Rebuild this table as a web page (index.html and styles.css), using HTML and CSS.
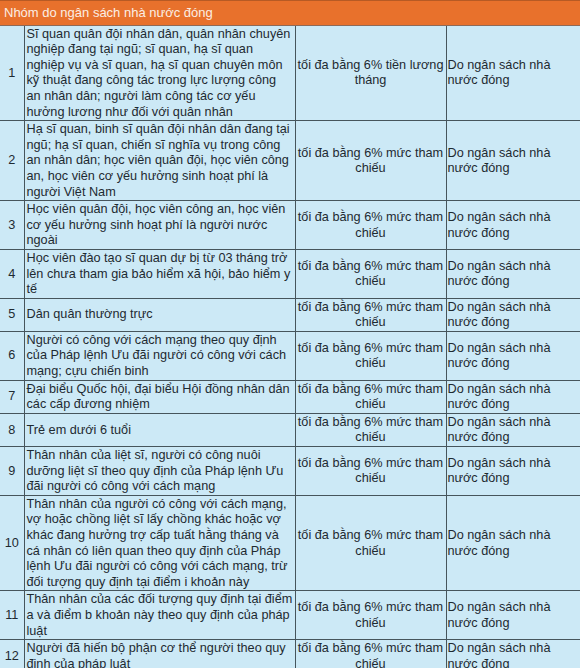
FILE: index.html
```html
<!DOCTYPE html>
<html lang="vi">
<head>
<meta charset="utf-8">
<title>Nhóm do ngân sách nhà nước đóng</title>
<link rel="stylesheet" href="styles.css">
</head>
<body>
<table class="grid">
  <colgroup>
    <col class="c-no">
    <col class="c-subject">
    <col class="c-rate">
    <col class="c-payer">
  </colgroup>
  <tbody>
    <tr class="group-row">
      <td colspan="4" class="group">Nhóm do ngân sách nhà nước đóng</td>
    </tr>
    <tr>
      <td class="no">1</td>
      <td class="subject">Sĩ quan quân đội nhân dân, quân nhân chuyên nghiệp đang tại ngũ; sĩ quan, hạ sĩ quan nghiệp vụ và sĩ quan, hạ sĩ quan chuyên môn kỹ thuật đang công tác trong lực lượng công an nhân dân; người làm công tác cơ yếu hưởng lương như đối với quân nhân</td>
      <td class="rate">tối đa bằng 6% tiền lương tháng</td>
      <td class="payer">Do ngân sách nhà nước đóng</td>
    </tr>
    <tr>
      <td class="no">2</td>
      <td class="subject">Hạ sĩ quan, binh sĩ quân đội nhân dân đang tại ngũ; hạ sĩ quan, chiến sĩ nghĩa vụ trong công an nhân dân; học viên quân đội, học viên công an, học viên cơ yếu hưởng sinh hoạt phí là người Việt Nam</td>
      <td class="rate">tối đa bằng 6% mức tham chiếu</td>
      <td class="payer">Do ngân sách nhà nước đóng</td>
    </tr>
    <tr>
      <td class="no">3</td>
      <td class="subject">Học viên quân đội, học viên công an, học viên cơ yếu hưởng sinh hoạt phí là người nước ngoài</td>
      <td class="rate">tối đa bằng 6% mức tham chiếu</td>
      <td class="payer">Do ngân sách nhà nước đóng</td>
    </tr>
    <tr>
      <td class="no">4</td>
      <td class="subject">Học viên đào tạo sĩ quan dự bị từ 03 tháng trở lên chưa tham gia bảo hiểm xã hội, bảo hiểm y tế</td>
      <td class="rate">tối đa bằng 6% mức tham chiếu</td>
      <td class="payer">Do ngân sách nhà nước đóng</td>
    </tr>
    <tr>
      <td class="no">5</td>
      <td class="subject">Dân quân thường trực</td>
      <td class="rate">tối đa bằng 6% mức tham chiếu</td>
      <td class="payer">Do ngân sách nhà nước đóng</td>
    </tr>
    <tr>
      <td class="no">6</td>
      <td class="subject">Người có công với cách mạng theo quy định của Pháp lệnh Ưu đãi người có công với cách mạng; cựu chiến binh</td>
      <td class="rate">tối đa bằng 6% mức tham chiếu</td>
      <td class="payer">Do ngân sách nhà nước đóng</td>
    </tr>
    <tr>
      <td class="no">7</td>
      <td class="subject">Đại biểu Quốc hội, đại biểu Hội đồng nhân dân các cấp đương nhiệm</td>
      <td class="rate">tối đa bằng 6% mức tham chiếu</td>
      <td class="payer">Do ngân sách nhà nước đóng</td>
    </tr>
    <tr>
      <td class="no">8</td>
      <td class="subject">Trẻ em dưới 6 tuổi</td>
      <td class="rate">tối đa bằng 6% mức tham chiếu</td>
      <td class="payer">Do ngân sách nhà nước đóng</td>
    </tr>
    <tr>
      <td class="no">9</td>
      <td class="subject">Thân nhân của liệt sĩ, người có công nuôi dưỡng liệt sĩ theo quy định của Pháp lệnh Ưu đãi người có công với cách mạng</td>
      <td class="rate">tối đa bằng 6% mức tham chiếu</td>
      <td class="payer">Do ngân sách nhà nước đóng</td>
    </tr>
    <tr>
      <td class="no">10</td>
      <td class="subject">Thân nhân của người có công với cách mạng, vợ hoặc chồng liệt sĩ lấy chồng khác hoặc vợ khác đang hưởng trợ cấp tuất hằng tháng và cá nhân có liên quan theo quy định của Pháp lệnh Ưu đãi người có công với cách mạng, trừ đối tượng quy định tại điểm i khoản này</td>
      <td class="rate">tối đa bằng 6% mức tham chiếu</td>
      <td class="payer">Do ngân sách nhà nước đóng</td>
    </tr>
    <tr>
      <td class="no">11</td>
      <td class="subject">Thân nhân của các đối tượng quy định tại điểm a và điểm b khoản này theo quy định của pháp luật</td>
      <td class="rate">tối đa bằng 6% mức tham chiếu</td>
      <td class="payer">Do ngân sách nhà nước đóng</td>
    </tr>
    <tr>
      <td class="no">12</td>
      <td class="subject">Người đã hiến bộ phận cơ thể người theo quy định của pháp luật</td>
      <td class="rate">tối đa bằng 6% mức tham chiếu</td>
      <td class="payer">Do ngân sách nhà nước đóng</td>
    </tr>
  </tbody>
</table>
</body>
</html>
```

FILE: styles.css
```css
html, body {
  margin: 0;
  padding: 0;
  background: #cce9f6;
  overflow: hidden;
}

.grid {
  width: 580px;
  table-layout: fixed;
  border-collapse: collapse;
  font-family: "Liberation Sans", Arial, sans-serif;
  font-size: 12.7px;
  line-height: 15.6px;
  color: #1e2a31;
  background: #cce9f6;
}

.c-no { width: 24px; }
.c-subject { width: 271px; }
.c-rate { width: 151px; }
.c-payer { width: 134px; }

.grid td {
  border: 1px solid #46555c;
  padding: 1px 1px 0 2px;
  vertical-align: middle;
}

.grid td.no {
  border-left: none;
  text-align: center;
  padding: 1px 0 0 0;
}

.grid td.payer {
  border-right: none;
  padding-left: 1px;
}

.grid td.rate {
  text-align: center;
  padding: 1px 0 0 0;
}

.grid td.group {
  background: #e8712c;
  color: #fbeee4;
  font-size: 13px;
  border-top: 1px solid #b75a24;
  border-left: none;
  border-right: none;
  border-bottom: 1px solid #8d6a58;
  padding: 4px 4px 4px 4px;
}
```
